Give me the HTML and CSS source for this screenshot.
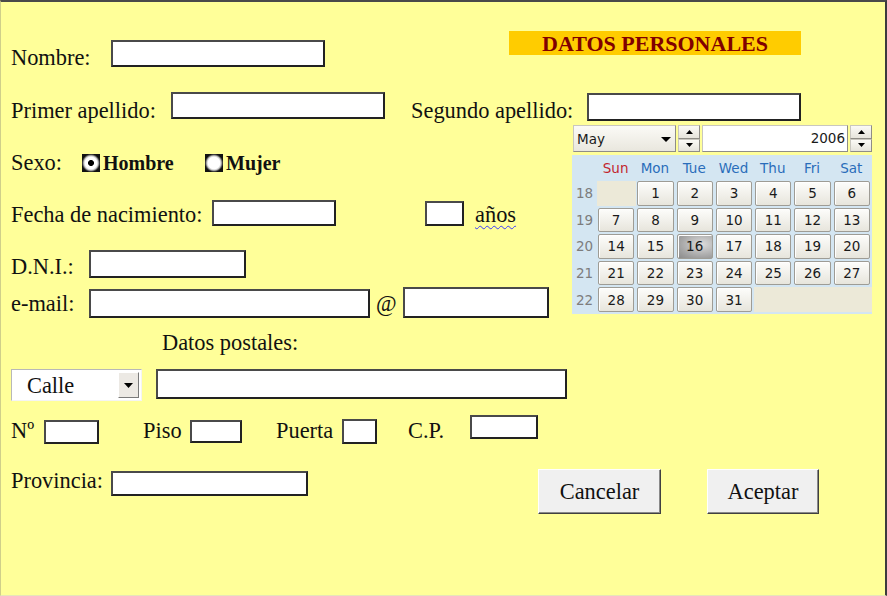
FILE: index.html
```html
<!DOCTYPE html>
<html lang="es">
<head>
<meta charset="utf-8">
<title>Datos personales</title>
<link rel="stylesheet" href="styles.css">
</head>
<body>
<div class="panel">
  <div class="row r1">
    <span class="lbl w-nombre">Nombre:</span>
    <input class="fld f-nombre" type="text">
    <div class="title">DATOS PERSONALES</div>
  </div>

  <div class="row r2">
    <span class="lbl w-ap1">Primer apellido:</span>
    <input class="fld f-ap1" type="text">
    <span class="lbl w-ap2">Segundo apellido:</span>
    <input class="fld f-ap2" type="text">
  </div>

  <div class="row r3">
    <span class="lbl w-sexo">Sexo:</span>
    <span class="radio checked"></span>
    <span class="rlbl w-hombre">Hombre</span>
    <span class="radio"></span>
    <span class="rlbl">Mujer</span>
  </div>

  <div class="row r4">
    <span class="lbl w-fecha">Fecha de nacimiento:</span>
    <input class="fld f-fecha" type="text">
    <input class="fld f-edad" type="text">
    <span class="lbl anios">años</span>
  </div>

  <div class="row r5">
    <span class="lbl w-dni">D.N.I.:</span>
    <input class="fld f-dni" type="text">
  </div>

  <div class="row r6">
    <span class="lbl w-dni">e-mail:</span>
    <input class="fld f-mail" type="text">
    <span class="lbl at">@</span>
    <input class="fld f-dom" type="text">
  </div>

  <div class="row r7">
    <span class="lbl postales">Datos postales:</span>
  </div>

  <div class="row r8">
    <div class="sel">
      <span class="sel-val">Calle</span>
      <span class="sel-btn"><svg width="9" height="5" viewBox="0 0 9 5"><path d="M0 0h9L4.5 5z" fill="#000"/></svg></span>
    </div>
    <input class="fld f-calle" type="text">
  </div>

  <div class="row r9">
    <span class="lbl w-num">Nº</span>
    <input class="fld f-num" type="text">
    <span class="lbl w-piso">Piso</span>
    <input class="fld f-piso" type="text">
    <span class="lbl w-puerta">Puerta</span>
    <input class="fld f-puerta" type="text">
    <span class="lbl w-cp">C.P.</span>
    <input class="fld f-cp" type="text">
  </div>

  <div class="row r10">
    <span class="lbl w-nombre">Provincia:</span>
    <input class="fld f-prov" type="text">
    <button class="btn b-cancel" type="button">Cancelar</button>
    <button class="btn b-ok" type="button">Aceptar</button>
  </div>

  <div class="cal">
    <div class="cal-head">
      <div class="cal-month">May<svg class="caret" width="10" height="5" viewBox="0 0 10 5"><path d="M0 0h10L5 5z" fill="#000"/></svg></div>
      <div class="spin">
        <span class="spin-b"><svg width="7" height="4" viewBox="0 0 7 4"><path d="M0 4h7L3.5 0z" fill="#000"/></svg></span>
        <span class="spin-b"><svg width="7" height="4" viewBox="0 0 7 4"><path d="M0 0h7L3.5 4z" fill="#000"/></svg></span>
      </div>
      <div class="cal-year">2006</div>
      <div class="spin">
        <span class="spin-b"><svg width="7" height="4" viewBox="0 0 7 4"><path d="M0 4h7L3.5 0z" fill="#000"/></svg></span>
        <span class="spin-b"><svg width="7" height="4" viewBox="0 0 7 4"><path d="M0 0h7L3.5 4z" fill="#000"/></svg></span>
      </div>
    </div>
    <div class="cal-grid">
      <span></span>
      <span class="dh sun">Sun</span><span class="dh">Mon</span><span class="dh">Tue</span><span class="dh">Wed</span><span class="dh">Thu</span><span class="dh">Fri</span><span class="dh">Sat</span>

      <span class="wk">18</span>
      <span class="day empty"></span><span class="day">1</span><span class="day">2</span><span class="day">3</span><span class="day">4</span><span class="day">5</span><span class="day">6</span>

      <span class="wk">19</span>
      <span class="day">7</span><span class="day">8</span><span class="day">9</span><span class="day">10</span><span class="day">11</span><span class="day">12</span><span class="day">13</span>

      <span class="wk">20</span>
      <span class="day">14</span><span class="day">15</span><span class="day today">16</span><span class="day">17</span><span class="day">18</span><span class="day">19</span><span class="day">20</span>

      <span class="wk">21</span>
      <span class="day">21</span><span class="day">22</span><span class="day">23</span><span class="day">24</span><span class="day">25</span><span class="day">26</span><span class="day">27</span>

      <span class="wk">22</span>
      <span class="day">28</span><span class="day">29</span><span class="day">30</span><span class="day">31</span><span class="day empty"></span><span class="day empty"></span><span class="day empty"></span>
    </div>
  </div>
</div>
</body>
</html>
```

FILE: styles.css
```css
html, body {
  margin: 0;
  padding: 0;
}

body {
  font-family: "Liberation Serif", "Times New Roman", serif;
  color: #111;
}

.panel {
  position: relative;
  box-sizing: border-box;
  width: 887px;
  height: 596px;
  background: #ffff99;
  border-top: 2px solid #4a4a4a;
  border-right: 2px solid #3c3c3c;
  border-left: 1px solid #cfcf8a;
  border-bottom: 1px solid #e6e6b8;
  padding: 29px 0 0 10px;
}

.row {
  display: flex;
  align-items: flex-start;
}

.lbl {
  font-size: 22.4px;
  line-height: 24px;
  white-space: nowrap;
  flex: none;
}

.fld {
  box-sizing: border-box;
  margin: 0;
  padding: 0;
  background: #fff;
  border: 2px solid;
  border-color: #4a4a4a #222 #222 #4a4a4a;
  border-radius: 0;
  outline: none;
  flex: none;
}

/* row 1 */
.r1 { height: 61px; }
.r1 .lbl { margin-top: 15px; }
.w-nombre { width: 100px; }
.f-nombre { width: 214px; height: 27px; margin-top: 9px; }
.title {
  margin-left: 184px;
  width: 292px;
  height: 24px;
  background: #ffcc00;
  color: #800000;
  font-weight: bold;
  font-size: 22px;
  line-height: 25px;
  text-align: center;
}

/* row 2 */
.r2 { height: 58px; }
.r2 .lbl { margin-top: 7px; }
.w-ap1 { width: 160px; }
.f-ap1 { width: 214px; height: 27px; }
.w-ap2 { width: 176px; margin-left: 26px; }
.f-ap2 { width: 214px; height: 28px; margin-top: 1px; }

/* row 3 */
.r3 { height: 50px; }
.r3 .lbl { margin-top: 1px; }
.w-sexo { width: 71px; }
.radio {
  flex: none;
  width: 18px;
  height: 18px;
  margin-top: 4px;
  background:
    radial-gradient(circle at 50% 50%, #fff 0 46%, #c8c8c8 56%, #444 66%, #111 72%);
  background-color: #111;
}
.radio.checked {
  background:
    radial-gradient(circle at 50% 50%, #000 0 20%, #fff 27% 46%, #c8c8c8 56%, #444 66%, #111 72%);
}
.rlbl {
  font-size: 20px;
  font-weight: bold;
  line-height: 24px;
  margin-top: 1px;
  margin-left: 3px;
  flex: none;
}
.w-hombre { width: 102px; }

/* row 4 */
.r4 { height: 50px; }
.r4 .lbl { margin-top: 3px; }
.w-fecha { width: 201px; }
.f-fecha { width: 124px; height: 26px; }
.f-edad { width: 39px; height: 25px; margin-left: 89px; margin-top: 1px; }
.anios {
  margin-left: 11px;
  text-decoration: underline wavy #3a3aff;
  text-decoration-thickness: 1px;
  text-underline-offset: 3px;
}

/* row 5 */
.r5 { height: 37px; }
.r5 .lbl { margin-top: 5px; }
.w-dni { width: 78px; }
.f-dni { width: 157px; height: 28px; }

/* row 6 */
.r6 { height: 43px; }
.r6 .lbl { margin-top: 5px; }
.f-mail { width: 281px; height: 29px; margin-top: 2px; }
.at { margin-left: 6px; width: 21px; }
.f-dom { width: 146px; height: 31px; margin-left: 6px; }

/* row 7 */
.r7 { height: 39px; }
.postales { margin-left: 151px; margin-top: 1px; }

/* row 8 */
.r8 { height: 46px; }
.sel {
  box-sizing: border-box;
  width: 131px;
  height: 32px;
  display: flex;
  align-items: center;
  background: #fff;
  border: 1px solid;
  border-color: #b8b8b8 #f4f4f4 #f4f4f4 #b8b8b8;
  flex: none;
}
.sel-val {
  flex: 1;
  font-size: 22.4px;
  line-height: 24px;
  padding-left: 15px;
  padding-top: 2px;
}
.sel-btn {
  box-sizing: border-box;
  width: 21px;
  height: 26px;
  margin-right: 2px;
  display: flex;
  align-items: center;
  justify-content: center;
  background: #ece9e4;
  border: 1px solid;
  border-color: #fff #7a7a7a #7a7a7a #fff;
}
.f-calle { width: 411px; height: 30px; margin-left: 14px; }

/* row 9 */
.r9 { height: 54px; }
.r9 .lbl { margin-top: 4px; }
.w-num { width: 33px; }
.f-num { width: 55px; height: 24px; margin-top: 5px; }
.w-piso { width: 47px; margin-left: 44px; }
.f-piso { width: 52px; height: 23px; margin-top: 5px; }
.w-puerta { width: 66px; margin-left: 34px; }
.f-puerta { width: 35px; height: 25px; margin-top: 4px; }
.w-cp { width: 62px; margin-left: 31px; }
.f-cp { width: 68px; height: 24px; }

/* row 10 */
.r10 .lbl { margin-top: 0; }
.f-prov { width: 197px; height: 25px; margin-top: 2px; }
.btn {
  box-sizing: border-box;
  height: 45px;
  margin: 0;
  padding: 0;
  font-family: "Liberation Serif", "Times New Roman", serif;
  font-size: 22.4px;
  color: #111;
  background: #f0f0f0;
  border: 1px solid;
  border-color: #ffffff #404040 #404040 #ffffff;
  box-shadow: inset -1px -1px 0 #8a8a8a;
  flex: none;
}
.b-cancel { width: 123px; margin-left: 230px; }
.b-ok { width: 112px; margin-left: 46px; }

/* calendar popup */
.cal {
  position: absolute;
  left: 571px;
  top: 122px;
  width: 300px;
  font-family: "DejaVu Sans", Verdana, sans-serif;
  font-size: 13.5px;
  color: #1a1a1a;
}
.cal-head {
  display: flex;
  align-items: flex-start;
  height: 31px;
}
.cal-month, .cal-year, .spin-b {
  box-sizing: border-box;
  border: 1px solid;
  border-color: #c9c7bf #8f8d86 #8f8d86 #c9c7bf;
}
.cal-month {
  width: 103px;
  height: 27px;
  margin: 1px 0 0 1px;
  display: flex;
  align-items: center;
  justify-content: space-between;
  padding: 0 4px 0 3px;
  background: linear-gradient(#fbfaf6, #e9e7de);
}
.caret { margin-top: 1px; }
.spin {
  width: 22px;
  height: 27px;
  margin: 1px 0 0 2px;
  display: flex;
  flex-direction: column;
}
.spin-b {
  flex: 1;
  display: flex;
  align-items: center;
  justify-content: center;
  background: linear-gradient(#fbfaf6, #e6e4db);
}
.cal-year {
  width: 146px;
  height: 27px;
  margin: 1px 0 0 2px;
  background: #fff;
  text-align: right;
  line-height: 25px;
  padding-right: 2px;
}
.cal-grid {
  display: grid;
  grid-template-columns: 25px repeat(7, 1fr);
  grid-template-rows: 26px repeat(5, 1fr);
  height: 159px;
  background: #d4e6f2;
}
.dh {
  display: flex;
  align-items: center;
  justify-content: center;
  color: #2a6dba;
  padding-right: 2px;
}
.dh.sun { color: #c2262e; }
.wk {
  display: flex;
  align-items: center;
  justify-content: center;
  color: #7d7d7d;
  padding-bottom: 2px;
}
.day {
  box-sizing: border-box;
  margin: 0 2px 2px 1px;
  display: flex;
  align-items: center;
  justify-content: center;
  border: 1px solid #9e9c95;
  border-radius: 2px;
  background: linear-gradient(#fdfdfb, #e7e5dc);
  box-shadow: inset 1px 1px 0 #fff;
}
.day.empty {
  margin: 0 0 2px 0;
  border: none;
  border-radius: 0;
  background: #ece9d8;
  box-shadow: none;
}
.day.today {
  background: radial-gradient(ellipse at 70% 40%, #dcdcdc, #a0a0a0 70%, #8a8a8a);
}
```
